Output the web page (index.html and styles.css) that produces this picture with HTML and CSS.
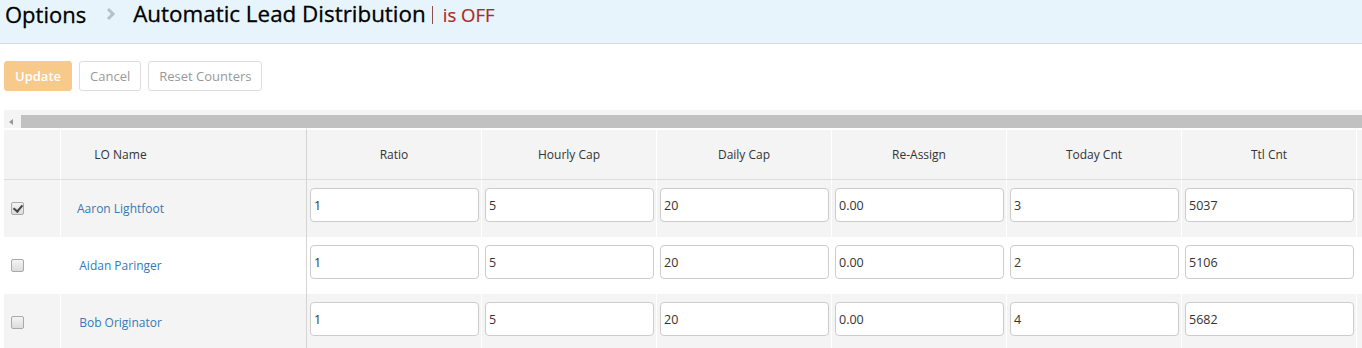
FILE: index.html
```html
<!DOCTYPE html>
<html lang="en">
<head>
    <meta charset="UTF-8">
    <title>Automatic Lead Distribution</title>
    <link rel="stylesheet" href="styles.css">
</head>
<body>

    <div class="page-head">
        <span class="crumb">Options</span>
        <svg class="crumb-sep" width="10" height="14" viewBox="0 0 10 14">
            <polyline points="2,2 7,7 2,12" fill="none" stroke="#b8c0c6" stroke-width="3"/>
        </svg>
        <span class="crumb crumb-current">Automatic Lead Distribution</span>
        <span class="status">is OFF</span>
    </div>

    <div class="toolbar">
        <button class="btn btn-primary" disabled>Update</button>
        <button class="btn">Cancel</button>
        <button class="btn">Reset Counters</button>
    </div>

    <div class="grid-wrap">
        <div class="hscroll">
            <span class="hscroll-arrow"></span>
            <span class="hscroll-thumb"></span>
        </div>
        <table class="grid">
            <thead>
                <tr>
                    <th class="col-check"></th>
                    <th class="col-name">LO Name</th>
                    <th>Ratio</th>
                    <th>Hourly Cap</th>
                    <th>Daily Cap</th>
                    <th>Re-Assign</th>
                    <th>Today Cnt</th>
                    <th>Ttl Cnt</th>
                    <th></th>
                </tr>
            </thead>
            <tbody>
                <tr>
                    <td class="col-check"><input type="checkbox" class="chk" checked></td>
                    <td class="col-name"><a href="#">Aaron Lightfoot</a></td>
                    <td><input type="text" value="1"></td>
                    <td><input type="text" value="5"></td>
                    <td><input type="text" value="20"></td>
                    <td><input type="text" value="0.00"></td>
                    <td><input type="text" value="3"></td>
                    <td><input type="text" value="5037"></td>
                    <td></td>
                </tr>
                <tr>
                    <td class="col-check"><input type="checkbox" class="chk"></td>
                    <td class="col-name"><a href="#">Aidan Paringer</a></td>
                    <td><input type="text" value="1"></td>
                    <td><input type="text" value="5"></td>
                    <td><input type="text" value="20"></td>
                    <td><input type="text" value="0.00"></td>
                    <td><input type="text" value="2"></td>
                    <td><input type="text" value="5106"></td>
                    <td></td>
                </tr>
                <tr>
                    <td class="col-check"><input type="checkbox" class="chk"></td>
                    <td class="col-name"><a href="#">Bob Originator</a></td>
                    <td><input type="text" value="1"></td>
                    <td><input type="text" value="5"></td>
                    <td><input type="text" value="20"></td>
                    <td><input type="text" value="0.00"></td>
                    <td><input type="text" value="4"></td>
                    <td><input type="text" value="5682"></td>
                    <td></td>
                </tr>
            </tbody>
        </table>
    </div>

</body>
</html>
```

FILE: styles.css
```css
body {
    font-family: "Open Sans", Arial, sans-serif;
    margin: 0;
    padding: 0;
    background-color: #fff;
    color: #333;
    overflow: hidden;
}

.page-head {
    height: 43px;
    background-color: #e8f4fc;
    border-bottom: 1px solid #d6dde2;
    display: flex;
    align-items: flex-start;
    padding-left: 5px;
}

.crumb {
    font-size: 22px;
    line-height: 28px;
    color: #000;
    -webkit-text-stroke: 0.3px #000;
}

.crumb-current {
    font-size: 22.4px;
}

.crumb-sep {
    margin: 7px 17px 0 20px;
}

.status {
    font-size: 18.5px;
    line-height: 18px;
    color: #b02828;
    -webkit-text-stroke: 0.2px #b02828;
    margin-top: 6px;
    margin-left: 6px;
    padding-left: 10px;
    border-left: 1px solid #8a5050;
}

.toolbar {
    display: flex;
    gap: 7px;
    padding: 17px 0 0 4px;
}

.btn {
    font-family: inherit;
    height: 30px;
    padding: 0 10px;
    font-size: 13px;
    color: #999;
    background-color: #fff;
    border: 1px solid #ddd;
    border-radius: 3px;
}

.btn-primary {
    background-color: #f7c98b;
    border-color: #f7c98b;
    color: #fff;
    font-weight: 600;
}

.grid-wrap {
    margin: 19px 0 0 4px;
    overflow: hidden;
}

.hscroll {
    height: 18px;
    background-color: #f4f4f4;
    display: flex;
    align-items: flex-end;
}

.hscroll-arrow {
    width: 17px;
    height: 13px;
    position: relative;
}

.hscroll-arrow::before {
    content: "";
    position: absolute;
    left: 5px;
    top: 4px;
    border-right: 4px solid #999;
    border-top: 3px solid transparent;
    border-bottom: 3px solid transparent;
}

.hscroll-thumb {
    flex: 1;
    height: 13px;
    background-color: #c1c1c1;
}

.grid {
    border-collapse: separate;
    border-spacing: 0;
    table-layout: fixed;
    width: 1528px;
}

.grid th,
.grid td {
    width: 175px;
    border-right: 1px solid #fff;
    padding: 0;
    box-sizing: border-box;
}

.grid th {
    height: 52px;
    background-color: #f4f4f4;
    font-weight: normal;
    font-size: 12px;
    color: #333;
    border-top: 2px solid #fff;
    border-bottom: 1px solid #ddd;
}

.grid td {
    height: 57px;
    padding: 8px 2px 0 3px;
    vertical-align: top;
}

.grid tbody tr:nth-child(odd) td {
    background-color: #f4f4f4;
}

.grid .col-check {
    width: 57px;
    padding: 0 0 0 7px;
    text-align: left;
    vertical-align: middle;
}

.grid .col-name {
    width: 246px;
    text-align: center;
    padding: 0 126px 0 0;
    vertical-align: middle;
    border-right: 1px solid #d4d4d4;
}

.grid td.col-check,
.grid td.col-name {
    padding-bottom: 4px;
}

.col-name a {
    color: #3679b5;
    font-size: 12px;
    text-decoration: none;
}

.grid td input[type="text"] {
    width: 100%;
    height: 34px;
    padding: 0 3px;
    margin: 0;
    border: 1px solid #ccc;
    border-radius: 4px;
    box-sizing: border-box;
    font-family: inherit;
    font-size: 12.5px;
    color: #333;
    background-color: #fff;
}

.chk {
    appearance: none;
    width: 13px;
    height: 13px;
    margin: 0;
    border: 1px solid #a9a9a9;
    border-radius: 2px;
    background: linear-gradient(#f4f4f4, #dcdcdc);
    position: relative;
    vertical-align: middle;
}

.chk:checked::after {
    content: "";
    position: absolute;
    left: 3px;
    top: 0;
    width: 4px;
    height: 7px;
    border-right: 2px solid #444;
    border-bottom: 2px solid #444;
    transform: rotate(40deg);
}
```
